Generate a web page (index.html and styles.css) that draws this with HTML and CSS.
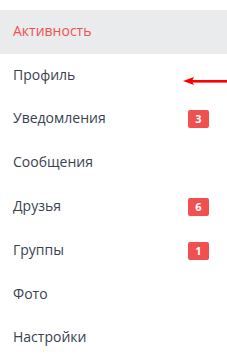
FILE: index.html
```html
<!DOCTYPE html>
<html lang="ru">
<head>
<meta charset="utf-8">
<link rel="stylesheet" href="styles.css">
</head>
<body>
<ul class="nav">
  <li class="item active"><span class="label">Активность</span></li>
  <li class="item"><span class="label">Профиль</span>
    <svg class="pointer" width="44" height="8" viewBox="0 0 44 8"><polygon points="0,4 11,0 9,4 11,8" fill="#f00"/><rect x="8" y="3" width="36" height="2.6" fill="#f00"/></svg>
  </li>
  <li class="item"><span class="label">Уведомления</span><span class="badge">3</span></li>
  <li class="item"><span class="label">Сообщения</span></li>
  <li class="item"><span class="label">Друзья</span><span class="badge">6</span></li>
  <li class="item"><span class="label">Группы</span><span class="badge">1</span></li>
  <li class="item"><span class="label">Фото</span></li>
  <li class="item"><span class="label">Настройки</span></li>
</ul>
</body>
</html>
```
FILE: styles.css
```css
html, body {
  margin: 0;
  padding: 0;
  background: #fff;
}
body {
  font-family: "Open Sans", "Liberation Sans", sans-serif;
  font-size: 14px;
  color: #3a3f51;
}
.nav {
  list-style: none;
  margin: 10px 0 0 0;
  padding: 0;
}
.item {
  position: relative;
  display: flex;
  align-items: center;
  justify-content: space-between;
  padding: 11px 18px 13px 13px;
  line-height: 19.5px;
}
.active {
  background: #eaebed;
  color: #f05050;
}
.badge {
  background: #f05050;
  color: #fff;
  font-weight: 700;
  font-size: 11px;
  line-height: 18px;
  height: 18px;
  width: 21px;
  margin-top: 2px;
  text-align: center;
  border-radius: 2px;
}
.pointer {
  position: absolute;
  left: 183px;
  top: 23px;
}
```
